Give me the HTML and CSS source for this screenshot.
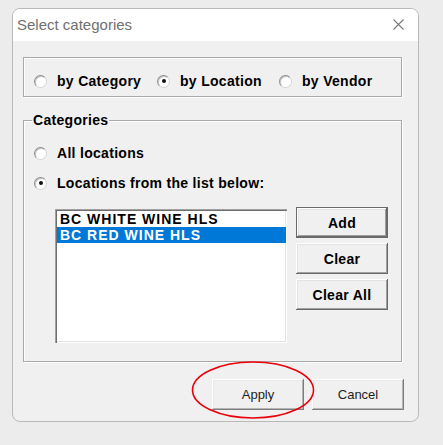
FILE: index.html
```html
<!DOCTYPE html>
<html lang="en">

<head>
    <meta charset="UTF-8" />
    <meta name="viewport" content="width=device-width, initial-scale=1.0" />
    <title>Select categories</title>
    <link rel="stylesheet" href="styles.css">
</head>

<body>
    <div class="window">
        <div class="titlebar">
            <span class="title">Select categories</span>
            <svg class="close" width="11" height="11" viewBox="0 0 11 11">
                <path d="M0.5 0.5 L10.5 10.5 M10.5 0.5 L0.5 10.5" stroke="#7a7a7a" stroke-width="1.1" fill="none" />
            </svg>
        </div>

        <div class="content">
            <div class="group mode">
                <div class="mode-row">
                    <label class="option"><span class="radio"></span>by Category</label>
                    <label class="option"><span class="radio checked"></span>by Location</label>
                    <label class="option"><span class="radio"></span>by Vendor</label>
                </div>
            </div>

            <fieldset class="group cats">
                <legend>Categories</legend>
                <div class="cats-body">
                    <label class="option"><span class="radio"></span>All locations</label>
                    <label class="option"><span class="radio checked"></span>Locations from the list below:</label>

                    <div class="picker">
                        <div class="listbox">
                            <div class="item">BC WHITE WINE HLS</div>
                            <div class="item selected">BC RED WINE HLS</div>
                        </div>
                        <div class="side-buttons">
                            <button class="btn bold default">Add</button>
                            <button class="btn bold">Clear</button>
                            <button class="btn bold">Clear All</button>
                        </div>
                    </div>
                </div>
            </fieldset>

            <div class="actions">
                <div class="apply-wrap">
                    <button class="btn plain">Apply</button>
                    <svg class="mark" width="126" height="61" viewBox="0 0 126 61">
                        <ellipse cx="62" cy="30" rx="60.5" ry="28" fill="none" stroke="#e8000b" stroke-width="1.6" />
                    </svg>
                </div>
                <button class="btn plain">Cancel</button>
            </div>
        </div>
    </div>
</body>

</html>
```

FILE: styles.css
```css
* {
    margin: 0;
    padding: 0;
    box-sizing: border-box;
}

body {
    background: #ececec;
    padding: 8px 0 0 12px;
    font-family: "Liberation Sans", Arial, sans-serif;
    color: #000;
}

.window {
    width: 407px;
    height: 414px;
    border: 1px solid #b9b9b9;
    border-radius: 8px;
    background: #f0f0f0;
    overflow: hidden;
    display: flex;
    flex-direction: column;
}

.titlebar {
    height: 32px;
    background: #fff;
    display: flex;
    align-items: center;
    justify-content: space-between;
    padding: 0 14px 0 4px;
}

.title {
    font-size: 15px;
    line-height: 32px;
    color: #707070;
}

.close {
    display: block;
    margin-top: -1px;
}

.content {
    padding: 16px 16px 0 10px;
}

/* etched group frames */
.group {
    border: 1px solid #a9a9a9;
    box-shadow: inset 1px 1px 0 #fff, 1px 1px 0 #fff;
}

.mode {
    height: 40px;
    padding: 15px 0 0 10px;
}

.mode-row {
    display: grid;
    grid-template-columns: 123px 122px auto;
}

.option {
    display: flex;
    align-items: center;
    height: 16px;
    gap: 10px;
    font-size: 14px;
    font-weight: bold;
    letter-spacing: 0.3px;
    white-space: nowrap;
}

.radio {
    width: 13px;
    height: 13px;
    border-radius: 50%;
    background: #fff;
    border: 1px solid;
    border-color: #8c8c8c #d6d6d6 #d6d6d6 #8c8c8c;
    box-shadow: inset 1px 1px 0 #c8c8c8;
    display: flex;
    align-items: center;
    justify-content: center;
    flex-shrink: 0;
}

.radio.checked::after {
    content: "";
    width: 4px;
    height: 4px;
    border-radius: 50%;
    background: #111;
}

.cats {
    margin-top: 15px;
    padding: 0;
    min-width: 0;
}

.cats legend {
    margin-left: 8px;
    padding: 0 1px;
    font-size: 14px;
    font-weight: bold;
    line-height: 16px;
    letter-spacing: 0.3px;
}

.cats-body {
    padding: 17px 0 18px 10px;
    display: flex;
    flex-direction: column;
    gap: 14px;
}

.picker {
    display: flex;
    gap: 9px;
    margin: 4px 0 0 21px;
}

.listbox {
    width: 232px;
    height: 134px;
    background: #fff;
    padding: 2px 1px 1px 2px;
    box-shadow:
        inset 1px 1px 0 #a0a0a0,
        inset 2px 2px 0 #6f6f6f,
        inset -1px -1px 0 #fff,
        inset -2px -2px 0 #e3e3e3;
}

.item {
    height: 16px;
    line-height: 16px;
    padding-left: 3px;
    font-size: 14px;
    font-weight: bold;
    letter-spacing: 1px;
    white-space: nowrap;
}

.item.selected {
    background: #0078d7;
    color: #fff;
}

.side-buttons {
    display: flex;
    flex-direction: column;
    gap: 5px;
    margin-top: -2px;
}

.btn {
    width: 92px;
    height: 31px;
    background: #f0f0f0;
    border: none;
    font-family: "Liberation Sans", Arial, sans-serif;
    color: #000;
    box-shadow:
        inset -1px -1px 0 #696969,
        inset 1px 1px 0 #fff,
        inset -2px -2px 0 #a0a0a0,
        inset 2px 2px 0 #e3e3e3;
}

.btn.bold {
    font-size: 14px;
    font-weight: bold;
    letter-spacing: 0.3px;
}

.btn.default {
    border: 1px solid #6a6a6a;
}

.btn.plain {
    font-size: 13px;
    color: #1e1e1e;
    box-shadow:
        inset -1px -1px 0 #7d7d7d,
        inset 1px 1px 0 #fff,
        inset -2px -2px 0 #b4b4b4,
        inset 2px 2px 0 #e8e8e8;
}

.actions {
    display: flex;
    justify-content: flex-end;
    gap: 8px;
    margin: 17px -2px 0 0;
}

.apply-wrap {
    position: relative;
}

.apply-wrap .btn {
    display: block;
}

/* hand-drawn ring around the Apply button */
.mark {
    position: absolute;
    left: -21px;
    top: -19px;
    pointer-events: none;
}
```
